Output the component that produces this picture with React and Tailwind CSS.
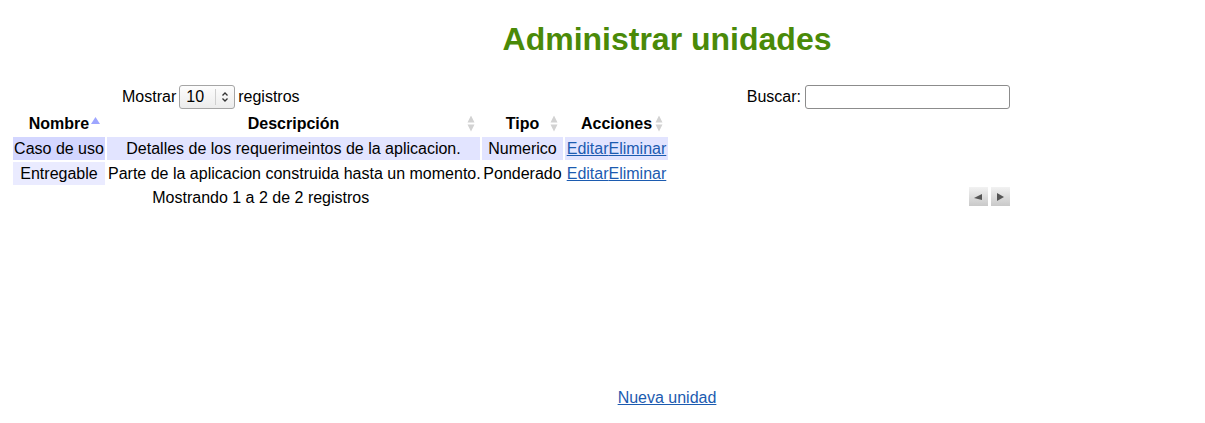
import React from "react";

function SortBoth() {
  return (
    <svg width="8" height="17" viewBox="0 0 8 17" className="absolute right-[5px] top-1/2 -translate-y-1/2">
      <polygon points="4,0 7.5,7 0.5,7" fill="#d2d2d2" />
      <polygon points="0.5,9 7.5,9 4,16" fill="#d2d2d2" />
    </svg>
  );
}

function SortAsc() {
  return (
    <svg width="9" height="7" viewBox="0 0 9 7" className="absolute right-[5px] top-[5px]">
      <polygon points="4.5,0 9,7 0,7" fill="#9ea6ff" />
    </svg>
  );
}

function Th({ children, w, asc }) {
  return (
    <th className={`relative ${w} px-[1px] py-[2px] leading-[19px] text-center font-bold`}>
      {children}
      {asc ? <SortAsc /> : <SortBoth />}
    </th>
  );
}

function Td({ children, bg }) {
  return <td className={`${bg} px-[1px] py-[2px] leading-[19px] text-center whitespace-nowrap`}>{children}</td>;
}

function Actions() {
  return (
    <>
      <a href="#" className="text-[#1c5bb0] underline">Editar</a>
      <a href="#" className="text-[#1c5bb0] underline">Eliminar</a>
    </>
  );
}

export default function App() {
  return (
    <div className="font-['Liberation_Sans',Arial,sans-serif] text-[16px] text-black bg-white min-h-[423px]">
      <h1 className="pl-[129px] pt-[21px] text-center text-[32px] leading-[37px] font-bold text-[#4a8a08]">
        Administrar unidades
      </h1>

      <div className="ml-[11px] mt-[27px] w-[999px]">
        <div className="flex h-[25px] items-start">
          <div className="w-[40%] flex justify-center items-center h-[24px]">
            <span>Mostrar</span>
            <div className="mx-[3px] flex h-[24px] w-[56px] items-center rounded-[3px] border border-[#a5a5a5] bg-gradient-to-b from-[#fdfdfd] to-[#ececec]">
              <span className="pl-[6px] w-[35px] leading-[22px]">10</span>
              <div className="h-[16px] w-px bg-[#cfcfcf]" />
              <svg width="8" height="12" viewBox="0 0 8 12" className="ml-[5px]">
                <polyline points="1.5,4.5 4,2 6.5,4.5" fill="none" stroke="#333" strokeWidth="1.3" />
                <polyline points="1.5,7.5 4,10 6.5,7.5" fill="none" stroke="#333" strokeWidth="1.3" />
              </svg>
            </div>
            <span>registros</span>
          </div>
          <div className="w-[60%] flex justify-end items-center h-[24px]">
            <span className="mr-[4px]">Buscar:</span>
            <div className="h-[24px] w-[205px] rounded-[3px] border border-[#8c8c8c] bg-white" />
          </div>
        </div>

        <table className="border-separate border-spacing-[2px] table-fixed w-[659px]">
          <thead>
            <tr>
              <Th w="w-[92px]" asc>Nombre</Th>
              <Th w="w-[373px]">Descripción</Th>
              <Th w="w-[81px]">Tipo</Th>
              <Th w="w-[103px]">Acciones</Th>
            </tr>
          </thead>
          <tbody>
            <tr>
              <Td bg="bg-[#d3d6ff]">Caso de uso</Td>
              <Td bg="bg-[#e2e4ff]">Detalles de los requerimeintos de la aplicacion.</Td>
              <Td bg="bg-[#e2e4ff]">Numerico</Td>
              <Td bg="bg-[#e2e4ff]"><Actions /></Td>
            </tr>
            <tr>
              <Td bg="bg-[#eaebff]">Entregable</Td>
              <Td bg="bg-white">Parte de la aplicacion construida hasta un momento.</Td>
              <Td bg="bg-white">Ponderado</Td>
              <Td bg="bg-white"><Actions /></Td>
            </tr>
          </tbody>
        </table>

        <div className="flex h-[20px] items-start">
          <div className="w-1/2 text-center leading-[20px] pt-[1px]">Mostrando 1 a 2 de 2 registros</div>
          <div className="w-1/2 flex justify-end gap-[3px]">
            <div className="flex h-[19px] w-[19px] items-center justify-center bg-gradient-to-b from-[#f2f2f2] to-[#c9c9c9]">
              <svg width="9" height="8" viewBox="0 0 9 8">
                <polygon points="0,5 8,1 8,7" fill="#555" />
              </svg>
            </div>
            <div className="flex h-[19px] w-[19px] items-center justify-center bg-gradient-to-b from-[#f2f2f2] to-[#c9c9c9]">
              <svg width="9" height="8" viewBox="0 0 9 8">
                <polygon points="1,0 8,4 1,8" fill="#555" />
              </svg>
            </div>
          </div>
        </div>
      </div>

      <div className="pl-[129px] mt-[181px] text-center leading-[19px]">
        <a href="#" className="text-[#1c5bb0] underline">Nueva unidad</a>
      </div>
    </div>
  );
}
